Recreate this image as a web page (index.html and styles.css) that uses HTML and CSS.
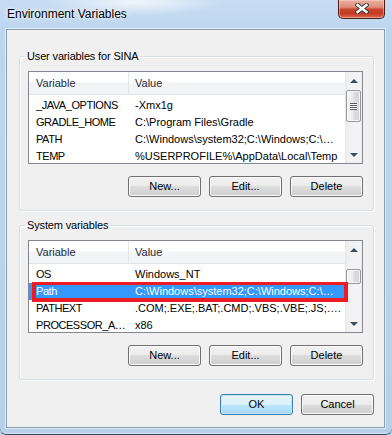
FILE: index.html
```html
<!DOCTYPE html>
<html lang="en">
<head>
<meta charset="utf-8">
<title>Environment Variables</title>
<link rel="stylesheet" href="styles.css">
</head>
<body>
<div class="window">
  <div class="titlebar">
    <span class="title">Environment Variables</span>
    <button class="close" aria-label="Close">
      <svg width="14" height="11" viewBox="0 0 14 11">
        <path d="M2.5 2 L11.5 9 M11.5 2 L2.5 9" stroke="#3a3a3a" stroke-width="4.4" stroke-linecap="square" fill="none"/>
        <path d="M2.5 2 L11.5 9 M11.5 2 L2.5 9" stroke="#ffffff" stroke-width="2.4" stroke-linecap="square" fill="none"/>
      </svg>
    </button>
  </div>
  <div class="client">
    <fieldset class="group">
      <legend>User variables for SINA</legend>
      <div class="list">
        <div class="list-main">
          <div class="list-header">
            <span class="col col-var">Variable</span>
            <span class="col col-val">Value</span>
          </div>
          <div class="list-body">
            <div class="row"><span class="col col-var">_JAVA_OPTIONS</span><span class="col col-val">-Xmx1g</span></div>
            <div class="row"><span class="col col-var">GRADLE_HOME</span><span class="col col-val">C:\Program Files\Gradle</span></div>
            <div class="row"><span class="col col-var">PATH</span><span class="col col-val">C:\Windows\system32;C:\Windows;C:\…</span></div>
            <div class="row"><span class="col col-var">TEMP</span><span class="col col-val">%USERPROFILE%\AppData\Local\Temp</span></div>
          </div>
        </div>
        <div class="scrollbar">
          <div class="sb-btn"><span class="arrow arrow-up"></span></div>
          <div class="sb-track">
            <div class="sb-thumb" style="margin-top:1px;height:32px"><span class="grip"></span></div>
          </div>
          <div class="sb-btn"><span class="arrow arrow-down"></span></div>
        </div>
      </div>
      <div class="buttons">
        <button class="btn">New...</button>
        <button class="btn">Edit...</button>
        <button class="btn">Delete</button>
      </div>
    </fieldset>

    <fieldset class="group group-system">
      <legend>System variables</legend>
      <div class="list">
        <div class="list-main">
          <div class="list-header">
            <span class="col col-var">Variable</span>
            <span class="col col-val">Value</span>
          </div>
          <div class="list-body">
            <div class="row"><span class="col col-var">OS</span><span class="col col-val">Windows_NT</span></div>
            <div class="row selected"><span class="col col-var">Path</span><span class="col col-val">C:\Windows\system32;C:\Windows;C:\…</span></div>
            <div class="row"><span class="col col-var">PATHEXT</span><span class="col col-val">.COM;.EXE;.BAT;.CMD;.VBS;.VBE;.JS;….</span></div>
            <div class="row"><span class="col col-var">PROCESSOR_A…</span><span class="col col-val">x86</span></div>
          </div>
        </div>
        <div class="scrollbar">
          <div class="sb-btn"><span class="arrow arrow-up"></span></div>
          <div class="sb-track">
            <div class="sb-thumb" style="margin-top:11px;height:15px"></div>
          </div>
          <div class="sb-btn"><span class="arrow arrow-down"></span></div>
        </div>
        <div class="mark"></div>
      </div>
      <div class="buttons">
        <button class="btn">New...</button>
        <button class="btn">Edit...</button>
        <button class="btn">Delete</button>
      </div>
    </fieldset>

    <div class="dialog-buttons">
      <button class="btn btn-default">OK</button>
      <button class="btn">Cancel</button>
    </div>
  </div>
</div>
</body>
</html>
```

FILE: styles.css
```css
* { box-sizing: border-box; }

html, body {
  margin: 0;
  padding: 0;
  background: #b9d2ec;
}

body {
  font-family: "Liberation Sans", Arial, sans-serif;
  font-size: 11px;
  color: #000;
}

.window {
  width: 392px;
  height: 435px;
  display: flex;
  flex-direction: column;
  background:
    radial-gradient(ellipse 90px 14px at 135px 2px, rgba(255,255,255,0.75), rgba(255,255,255,0) 100%),
    linear-gradient(to bottom, #c6dcf3 0, #bdd6ef 30px, #b8d1eb 100%);
  border-bottom-left-radius: 6px;
  border-bottom-right-radius: 6px;
  box-shadow: inset 0 -1px 0 #34465b, inset 0 -2px 0 rgba(255,255,255,0.35);
  overflow: hidden;
}

.titlebar {
  height: 29px;
  display: flex;
  align-items: flex-start;
  padding-left: 7px;
  flex: none;
}

.title {
  margin-top: 7px;
  font-size: 12px;
  line-height: 14px;
  color: #000;
  text-shadow: 0 0 6px rgba(255,255,255,0.9), 0 0 3px rgba(255,255,255,0.9);
}

.close {
  margin-left: auto;
  margin-right: 7px;
  width: 47px;
  height: 19px;
  padding: 0;
  border: 1px solid #4f1f17;
  border-top: none;
  border-radius: 0 0 5px 5px;
  background: linear-gradient(to bottom, #eab0a3 0%, #de8d7b 40%, #c8452e 52%, #c43a23 75%, #d86a53 100%);
  box-shadow: inset 0 0 0 1px rgba(255,220,210,0.45);
  display: flex;
  align-items: center;
  justify-content: center;
}

.close svg { display: block; margin-top: -1px; }

.client {
  margin: 0 7px 0 6px;
  height: 399px;
  flex: none;
  background: #f0f0f0;
  border: 1px solid #8b9db1;
  box-shadow: 0 0 0 1px rgba(255,255,255,0.55);
  padding: 19px 10px 0 12px;
  display: flex;
  flex-direction: column;
}

.group {
  margin: 0;
  min-width: 0;
  border: 1px solid #d5dfe5;
  border-radius: 3px;
  box-shadow: inset 1px 1px 0 #fff, 1px 1px 0 #fff;
  padding: 8px 10px 13px 8px;
}

.group legend {
  margin-left: -3px;
  padding: 0 2px;
  font-size: 11px;
  line-height: 14px;
  letter-spacing: -0.15px;
}

.group-system { margin-top: 7px; }

.list {
  position: relative;
  height: 93px;
  display: flex;
  border: 1px solid #828790;
  background: #fff;
}

.list-main {
  flex: 1;
  min-width: 0;
  display: flex;
  flex-direction: column;
}

.list-header {
  height: 23px;
  flex: none;
  display: flex;
  background: linear-gradient(to bottom, #ffffff 0%, #ffffff 45%, #f3f4f6 50%, #f2f3f5 100%);
  border-bottom: 1px solid #e3e4e6;
  line-height: 22px;
  color: #1e2a38;
}

.list-header .col-var { border-right: 1px solid #e2e5ea; }

.list-body {
  flex: 1;
  overflow: hidden;
  padding-top: 2px;
}

.row {
  display: flex;
  height: 17px;
  line-height: 17px;
  white-space: nowrap;
}

.col { display: block; overflow: hidden; white-space: nowrap; }
.col-var { width: 100px; flex: none; padding-left: 7px; }
.row .col-var { letter-spacing: -0.45px; }
.col-val { flex: 1; padding-left: 6px; }

.row.selected {
  background: #3399ff;
  color: #fff;
}

.mark {
  position: absolute;
  left: 3px;
  top: 41px;
  width: 316px;
  height: 20px;
  border: 4px solid #ed1c24;
  border-top-width: 3px;
  pointer-events: none;
}

.scrollbar {
  width: 17px;
  flex: none;
  display: flex;
  flex-direction: column;
  background: linear-gradient(to right, #e6e6e6 0, #efefef 2px, #f3f3f3 50%, #f4f4f4 15px, #e9e9e9 17px);
}

.sb-btn {
  height: 17px;
  flex: none;
  display: flex;
  align-items: center;
  justify-content: center;
}

.arrow {
  width: 0;
  height: 0;
  border-left: 4px solid transparent;
  border-right: 4px solid transparent;
}
.arrow-up { border-bottom: 4px solid #3e4b5a; }
.arrow-down { border-top: 4px solid #3e4b5a; }

.sb-track {
  flex: 1;
  display: flex;
  flex-direction: column;
}

.sb-thumb {
  margin-left: 1px;
  margin-right: 1px;
  border: 1px solid #989898;
  border-radius: 2px;
  background: linear-gradient(to right, #f4f4f4 0%, #ececec 45%, #dcdcdc 55%, #d6d6d6 100%);
  box-shadow: inset 0 0 0 1px rgba(255,255,255,0.7);
  display: flex;
  align-items: center;
  justify-content: center;
}

.grip {
  width: 7px;
  height: 7px;
  background: repeating-linear-gradient(to bottom, #5d5d5d 0, #5d5d5d 1px, #f6f6f6 1px, #f6f6f6 2px);
}

.buttons {
  margin-top: 12px;
  display: flex;
  justify-content: flex-end;
  gap: 8px;
}

.btn {
  width: 73px;
  height: 21px;
  padding: 0;
  border: 1px solid #707070;
  border-radius: 3px;
  background: linear-gradient(to bottom, #f2f2f2 0%, #ebebeb 50%, #dddddd 50%, #cfcfcf 100%);
  box-shadow: inset 0 0 0 1px #fbfbfb;
  font-family: "Liberation Sans", Arial, sans-serif;
  font-size: 11px;
  line-height: 19px;
  color: #000;
}

.btn-default {
  border-color: #3c7fb1;
  background: linear-gradient(to bottom, #eaf6fd 0%, #d9f0fc 50%, #bee6fd 50%, #a7d9f5 100%);
  box-shadow: inset 0 0 0 1px #c3e4f7;
}

.dialog-buttons {
  margin-top: 14px;
  display: flex;
  justify-content: flex-end;
  gap: 8px;
}
```
